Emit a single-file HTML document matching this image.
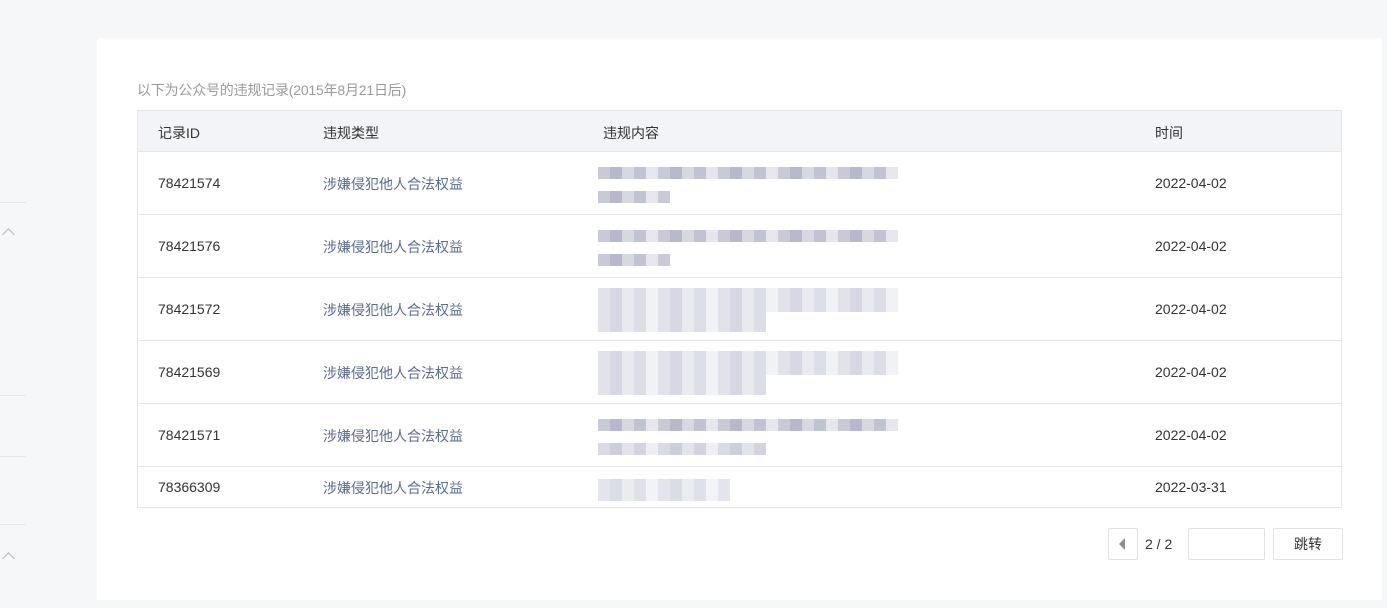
<!DOCTYPE html><html><head><meta charset="utf-8"><style>
body{margin:0;width:1387px;height:608px;background:#f6f7f9;font-family:"Liberation Sans","Noto Sans CJK SC",sans-serif;position:relative;overflow:hidden}
.l{position:absolute;left:0;width:26px;height:1px;background:#e4e6ea}
.chev{position:absolute;left:4px;width:8px;height:8px;border-left:1.5px solid #b5b8bf;border-top:1.5px solid #b5b8bf;transform:rotate(45deg)}
.card{position:absolute;left:97px;top:38px;width:1285px;height:562px;background:#fff;border-radius:2px}
.note{position:absolute;left:137px;top:80px;font-size:14px;color:#9a9a9a;letter-spacing:-0.2px}
.tbl{position:absolute;left:137px;top:110px;width:1203px;height:396px;border:1px solid #e4e6ea}
.hd{position:absolute;left:0;top:0;width:100%;height:40px;background:#f3f4f7;border-bottom:1px solid #e4e6ea}
.c{position:absolute;font-size:14px;color:#333}
.t{color:#5b6b8e}
.row{position:absolute;left:0;width:100%;border-bottom:1px solid #e4e6ea}
.b{position:absolute;height:12px;background:repeating-linear-gradient(90deg,#c8cad8 0 12px,#b6b9cc 12px 24px,#d6d8e2 24px 36px,#bfc3d4 36px 48px,#e6e7ee 48px 60px)}
.pb{position:absolute;border:1px solid #e1e3e7;border-radius:2px;background:#fff;height:30px;top:528px}
</style></head><body>
<div class="l" style="top:202px"></div><div class="chev" style="top:230px"></div>
<div class="l" style="top:395px"></div><div class="l" style="top:456px"></div>
<div class="l" style="top:524px"></div><div class="chev" style="top:554px"></div>
<div class="card"></div>
<div class="note">以下为公众号的违规记录(2015年8月21日后)</div>
<div class="tbl">
<div class="hd"><span class="c" style="left:20px;top:12px">记录ID</span><span class="c" style="left:185px;top:12px">违规类型</span><span class="c" style="left:465px;top:12px">违规内容</span><span class="c" style="left:1017px;top:12px">时间</span></div>
<div class="row" style="top:41px;height:62px"><span class="c" style="left:20px;top:23px">78421574</span><span class="c t" style="left:185px;top:22px">涉嫌侵犯他人合法权益</span><span class="c" style="left:1017px;top:23px">2022-04-02</span><div class="b" style="left:460px;top:15px;width:300px"></div><div class="b" style="left:460px;top:39px;width:72px"></div></div>
<div class="row" style="top:104px;height:62px"><span class="c" style="left:20px;top:23px">78421576</span><span class="c t" style="left:185px;top:22px">涉嫌侵犯他人合法权益</span><span class="c" style="left:1017px;top:23px">2022-04-02</span><div class="b" style="left:460px;top:15px;width:300px"></div><div class="b" style="left:460px;top:39px;width:72px"></div></div>
<div class="row" style="top:167px;height:62px"><span class="c" style="left:20px;top:23px">78421572</span><span class="c t" style="left:185px;top:22px">涉嫌侵犯他人合法权益</span><span class="c" style="left:1017px;top:23px">2022-04-02</span><div class="b" style="left:460px;top:10px;width:300px;height:24px;opacity:.55"></div><div class="b" style="left:460px;top:34px;width:168px;height:20px;opacity:.55"></div></div>
<div class="row" style="top:230px;height:62px"><span class="c" style="left:20px;top:23px">78421569</span><span class="c t" style="left:185px;top:22px">涉嫌侵犯他人合法权益</span><span class="c" style="left:1017px;top:23px">2022-04-02</span><div class="b" style="left:460px;top:10px;width:300px;height:24px;opacity:.55"></div><div class="b" style="left:460px;top:34px;width:168px;height:20px;opacity:.55"></div></div>
<div class="row" style="top:293px;height:62px"><span class="c" style="left:20px;top:23px">78421571</span><span class="c t" style="left:185px;top:22px">涉嫌侵犯他人合法权益</span><span class="c" style="left:1017px;top:23px">2022-04-02</span><div class="b" style="left:460px;top:15px;width:300px"></div><div class="b" style="left:460px;top:39px;width:168px;opacity:.7"></div></div>
<div class="row" style="top:356px;height:40px;border:0"><span class="c" style="left:20px;top:12px">78366309</span><span class="c t" style="left:185px;top:11px">涉嫌侵犯他人合法权益</span><span class="c" style="left:1017px;top:12px">2022-03-31</span><div class="b" style="left:460px;top:12px;width:132px;height:22px;opacity:.5"></div></div>
</div>
<div class="pb" style="left:1108px;width:28px"><div style="position:absolute;left:10px;top:9px;border-right:6px solid #8f8f8f;border-top:6px solid transparent;border-bottom:6px solid transparent"></div></div>
<span class="c" style="left:1145px;top:536px">2 / 2</span>
<div class="pb" style="left:1188px;width:75px"></div>
<div class="pb" style="left:1273px;width:68px;text-align:center;line-height:30px;font-size:14px;color:#333">跳转</div>
</body></html>
